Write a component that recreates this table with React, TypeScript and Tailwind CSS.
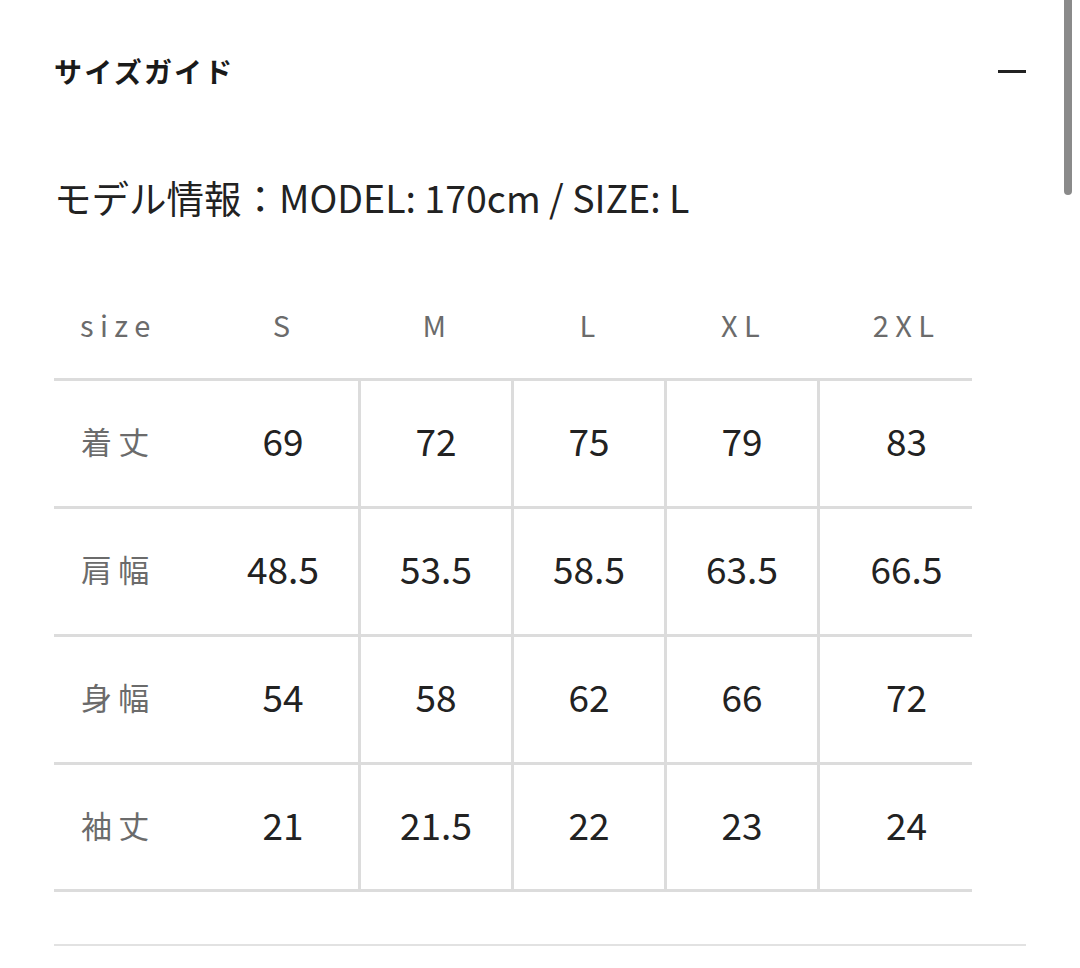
import { Minus } from "lucide-react";

const font = { fontFamily: '"Noto Sans CJK JP", "Noto Sans", sans-serif' };

const sizes = ["S", "M", "L", "XL", "2XL"];

const rows = [
  { label: "着丈", values: ["69", "72", "75", "79", "83"] },
  { label: "肩幅", values: ["48.5", "53.5", "58.5", "63.5", "66.5"] },
  { label: "身幅", values: ["54", "58", "62", "66", "72"] },
  { label: "袖丈", values: ["21", "21.5", "22", "23", "24"] },
];

const SizeGuide = () => {
  return (
    <div className="relative min-h-[968px] bg-white px-[54px]" style={font}>
      {/* header */}
      <div className="flex items-center justify-between pt-[50px]">
        <h2 className="text-[28px] leading-[42px] font-bold tracking-[0.08em] text-[#1a1a1a]">サイズガイド</h2>
        <div className="h-[3px] w-[28px] bg-[#222]" />
      </div>

      {/* model info */}
      <p className="mt-[82px] text-[37.5px] leading-[46px] text-[#222]">モデル情報：MODEL: 170cm / SIZE: L</p>

      {/* size table */}
      <div className="mt-[59px] w-[918px]">
        <div className="grid h-[99px] grid-cols-[154px_153px_153px_153px_153px_152px] items-center pb-[8px] text-[29px] tracking-[0.22em] text-[#6b6b6b]">
          <div className="pl-[26px]">size</div>
          {sizes.map((s, i) => (
            <div key={s} className={i === 4 ? "pl-[21px] text-center" : "text-center"}>
              {s}
            </div>
          ))}
        </div>

        {rows.map((row, r) => (
          <div
            key={row.label}
            className={
              r === rows.length - 1
                ? "grid h-[130px] grid-cols-[154px_153px_153px_153px_153px_152px] border-y-[3px] border-[#dcdcdc]"
                : "grid h-[128px] grid-cols-[154px_153px_153px_153px_153px_152px] border-t-[3px] border-[#dcdcdc]"
            }
          >
            <div className="flex items-center pb-[4px] pl-[27px] text-[31px] tracking-[0.2em] text-[#6b6b6b]">
              {row.label}
            </div>
            {row.values.map((v, i) => (
              <div
                key={i}
                className={
                  i === 4
                    ? "flex items-center justify-center pb-[5px] pl-[21px] text-[37px] text-[#222]"
                    : "flex items-center justify-center border-r-[3px] border-[#dcdcdc] pb-[5px] text-[37px] text-[#222]"
                }
              >
                {v}
              </div>
            ))}
          </div>
        ))}
      </div>

      {/* bottom divider */}
      <div className="mt-[52px] h-[2px] bg-[#e2e2e2]" />

      {/* scrollbar */}
      <div className="absolute top-0 right-[8px] h-[195px] w-[8px] rounded-b-full bg-[#8a8a8a]" />
    </div>
  );
};

export default function App() {
  return <SizeGuide />;
}
